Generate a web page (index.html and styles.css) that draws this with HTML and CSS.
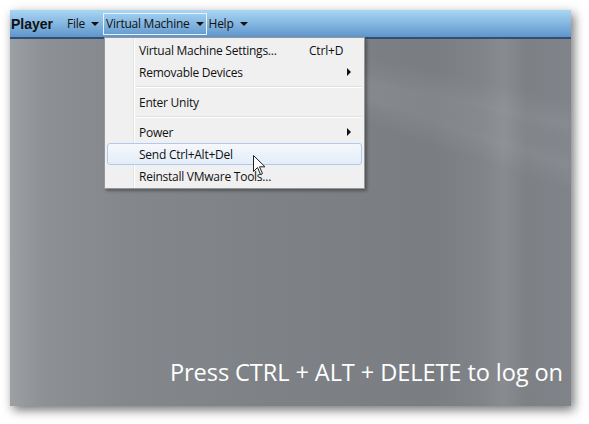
FILE: index.html
```html
<!DOCTYPE html>
<html>
<head>
<meta charset="utf-8">
<link rel="stylesheet" href="styles.css">
</head>
<body>
<div class="window">
  <div class="toolbar">
    <span class="brand">Player</span>
    <span class="mitem">File <span class="caret"></span></span>
    <span class="mitem open">Virtual Machine <span class="caret"></span></span>
    <span class="mitem help">Help <span class="caret"></span></span>
  </div>
  <div class="screen">
    <div class="streak s1"></div>
    <div class="streak s2"></div>
    <div class="logon">Press CTRL + ALT + DELETE to log on</div>
  </div>
  <div class="menu">
    <div class="row"><span class="label">Virtual Machine Settings...</span><span class="key">Ctrl+D</span></div>
    <div class="row"><span class="label">Removable Devices</span><span class="sub"></span></div>
    <div class="sep"></div>
    <div class="row"><span class="label">Enter Unity</span></div>
    <div class="sep"></div>
    <div class="row"><span class="label">Power</span><span class="sub"></span></div>
    <div class="row hot"><span class="label">Send Ctrl+Alt+Del</span></div>
    <div class="row"><span class="label">Reinstall VMware Tools...</span></div>
  </div>
  <svg class="cursor" width="13" height="21" viewBox="0 0 13 21">
    <path d="M0.5 0.5 L0.5 16.5 L4.5 12.5 L7.5 19.5 L9.5 18.5 L6.5 11.8 L12 11.8 Z" fill="#fff" stroke="#222" stroke-width="1"/>
  </svg>
</div>
</body>
</html>
```
FILE: styles.css
```css
html, body {
  margin: 0;
  padding: 0;
  background: #ffffff;
}
body {
  width: 589px;
  height: 424px;
  overflow: hidden;
  font-family: "Open Sans", "Noto Sans", sans-serif;
}
.window {
  position: relative;
  margin: 10px 0 0 10px;
  width: 561px;
  height: 396px;
  display: flex;
  flex-direction: column;
  box-shadow: 3px 4px 10px rgba(0, 0, 0, 0.55);
}
.toolbar {
  height: 27px;
  flex: none;
  display: flex;
  align-items: center;
  background: linear-gradient(#a9d6f3, #84b6e0 50%, #5f96cb);
  border-bottom: 2px solid #2f4f74;
  font-size: 12px;
  color: #111;
}
.brand {
  font-family: "Liberation Sans", sans-serif;
  font-weight: bold;
  font-size: 14px;
  margin-left: 1px;
  margin-right: 11px;
}
.mitem {
  display: flex;
  align-items: center;
  height: 20px;
  padding: 0 2px;
  border: 1px solid transparent;
  letter-spacing: -0.25px;
}
.mitem.open {
  border-color: #e8f1fa;
  margin-left: 1px;
}
.mitem.help {
  margin-left: -1px;
}
.caret {
  display: inline-block;
  width: 0;
  height: 0;
  margin-left: 6px;
  border-left: 4px solid transparent;
  border-right: 4px solid transparent;
  border-top: 4px solid #111;
}
.screen {
  position: relative;
  flex: 1;
  overflow: hidden;
  display: flex;
  align-items: flex-end;
  justify-content: flex-end;
  padding: 0 8px 18px 0;
  background:
    linear-gradient(90deg, #9ca0a4 0%, #8d9195 6%, #84888c 20%, #7e8286 45%, #7a7e82 75%, #808488 84%, #888c90 88%, #7d8185 92%, #80848a 100%);
}
.streak {
  position: absolute;
  height: 50px;
  width: 700px;
  transform-origin: left top;
  background: linear-gradient(rgba(255,255,255,0), rgba(255,255,255,0.06), rgba(255,255,255,0));
}
.s1 { left: 230px; top: -10px; transform: rotate(12deg); }
.s2 { left: 300px; top: 15px; transform: rotate(18deg); }
.logon {
  position: relative;
  color: #ffffff;
  font-size: 23.6px;
  letter-spacing: -0.1px;
}
.menu {
  position: absolute;
  left: 94px;
  top: 27px;
  width: 259px;
  padding: 1px 0 1px;
  background: linear-gradient(90deg, #f0f0f0 28px, #e2e3e3 28px, #e2e3e3 29px, #ffffff 29px, #ffffff 30px, #f0f0f0 30px);
  border: 1px solid #979797;
  box-shadow: 2px 2px 3px rgba(0, 0, 0, 0.35);
  font-size: 12px;
  color: #111;
}
.row {
  box-sizing: border-box;
  position: relative;
  display: flex;
  align-items: center;
  height: 22px;
  margin: 0 2px;
  padding-left: 31px;
  border: 1px solid transparent;
  border-radius: 3px;
}
.row.hot {
  border-color: #aecbef;
  background: linear-gradient(#f5f8fc, #e3ecf8);
}
.label {
  flex: 1;
  letter-spacing: -0.25px;
}
.key {
  width: 52px;
  letter-spacing: -0.2px;
}
.sub {
  width: 0;
  height: 0;
  margin-right: 10px;
  border-top: 4px solid transparent;
  border-bottom: 4px solid transparent;
  border-left: 4px solid #111;
}
.sep {
  height: 1px;
  margin: 3px 2px 3px 31px;
  background: #e0e0e0;
  border-bottom: 1px solid #ffffff;
}
.cursor {
  position: absolute;
  left: 243px;
  top: 145px;
}
```
